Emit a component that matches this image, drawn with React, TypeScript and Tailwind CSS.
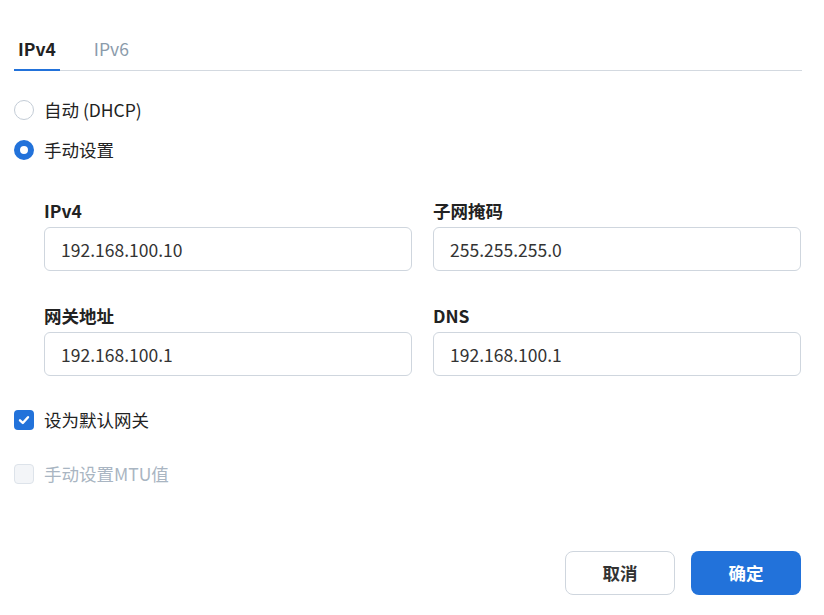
import React, { useState } from "react";

const Field: React.FC<{ label: string; value: string }> = ({ label, value }) => {
  return (
    <div className="flex flex-col gap-[3px]">
      <label className="text-[17.5px] leading-[26px] font-bold text-[#222]">{label}</label>
      <input
        defaultValue={value}
        className="h-[44px] w-full rounded-[6px] border border-[#cfd6de] bg-white pl-4 text-[17.5px] text-[#333] outline-none"
      />
    </div>
  );
};

const App: React.FC = () => {
  const [tab, setTab] = useState("v4");
  const [mode, setMode] = useState("manual");
  const [gateway, setGateway] = useState(true);

  return (
    <div
      className="min-h-[615px] bg-white pl-[14px] pr-[22px] pt-[36px] text-[#222]"
      style={{ fontFamily: '"Noto Sans CJK SC", "Noto Sans", sans-serif' }}
    >
      {/* Tabs */}
      <div className="flex gap-[30px] border-b border-[#d3d9e0]">
        <button
          onClick={() => setTab("v4")}
          className={
            tab === "v4"
              ? "-mb-px border-b-2 border-[#2272da] px-[4px] pb-[7px] text-[17.5px] leading-[26px] font-bold text-[#222]"
              : "-mb-px border-b-2 border-transparent px-[4px] pb-[7px] text-[17.5px] leading-[26px] text-[#8b9bab]"
          }
        >
          IPv4
        </button>
        <button
          onClick={() => setTab("v6")}
          className={
            tab === "v6"
              ? "-mb-px border-b-2 border-[#2272da] px-[4px] pb-[7px] text-[17.5px] leading-[26px] font-bold text-[#222]"
              : "-mb-px border-b-2 border-transparent px-[4px] pb-[7px] text-[17.5px] leading-[26px] text-[#8b9bab]"
          }
        >
          IPv6
        </button>
      </div>

      {/* Mode radios */}
      <div className="mt-[26px] flex flex-col gap-[14px]">
        <label className="flex items-center gap-[10px] text-[17.5px] leading-[26px] text-[#222]" onClick={() => setMode("dhcp")}>
          <span
            className={
              mode === "dhcp"
                ? "h-[20px] w-[20px] rounded-full border-[6px] border-[#2272da] bg-white"
                : "h-[20px] w-[20px] rounded-full border border-[#c3ccd6] bg-white"
            }
          />
          自动 (DHCP)
        </label>
        <label className="flex items-center gap-[10px] text-[17.5px] leading-[26px] text-[#222]" onClick={() => setMode("manual")}>
          <span
            className={
              mode === "manual"
                ? "h-[20px] w-[20px] rounded-full border-[6px] border-[#2272da] bg-white"
                : "h-[20px] w-[20px] rounded-full border border-[#c3ccd6] bg-white"
            }
          />
          手动设置
        </label>
      </div>

      {/* Address fields */}
      <div className="mt-[35px] ml-[30px] mr-[1px] grid grid-cols-2 gap-x-[21px] gap-y-[32px]">
        <Field label="IPv4" value="192.168.100.10" />
        <Field label="子网掩码" value="255.255.255.0" />
        <Field label="网关地址" value="192.168.100.1" />
        <Field label="DNS" value="192.168.100.1" />
      </div>

      {/* Checkboxes */}
      <div className="mt-[31px] flex flex-col gap-[28px]">
        <label className="flex items-center gap-[10px] text-[17.5px] leading-[26px] text-[#222]" onClick={() => setGateway(!gateway)}>
          <span
            className={
              gateway
                ? "flex h-[20px] w-[20px] items-center justify-center rounded-[4px] bg-[#2272da]"
                : "h-[20px] w-[20px] rounded-[4px] border border-[#c3ccd6] bg-white"
            }
          >
            {gateway && (
              <svg width="14" height="14" viewBox="0 0 14 14" fill="none">
                <path d="M3 7.3 L5.8 10 L11 4.2" stroke="white" strokeWidth="2.4" strokeLinecap="round" strokeLinejoin="round" />
              </svg>
            )}
          </span>
          设为默认网关
        </label>
        <label className="flex items-center gap-[10px] text-[17.5px] leading-[26px] text-[#a9b5c2]">
          <span className="h-[20px] w-[20px] rounded-[4px] border border-[#dde3ea] bg-[#f3f5f8]" />
          手动设置MTU值
        </label>
      </div>

      {/* Actions */}
      <div className="mt-[64px] mr-[1px] flex justify-end gap-[16px]">
        <button className="h-[44px] w-[110px] rounded-[8px] border border-[#cfd6de] bg-white text-[17.5px] font-bold text-[#333]">
          取消
        </button>
        <button className="h-[44px] w-[110px] rounded-[8px] bg-[#2272da] text-[17.5px] font-bold text-white">
          确定
        </button>
      </div>
    </div>
  );
};

export default App;
